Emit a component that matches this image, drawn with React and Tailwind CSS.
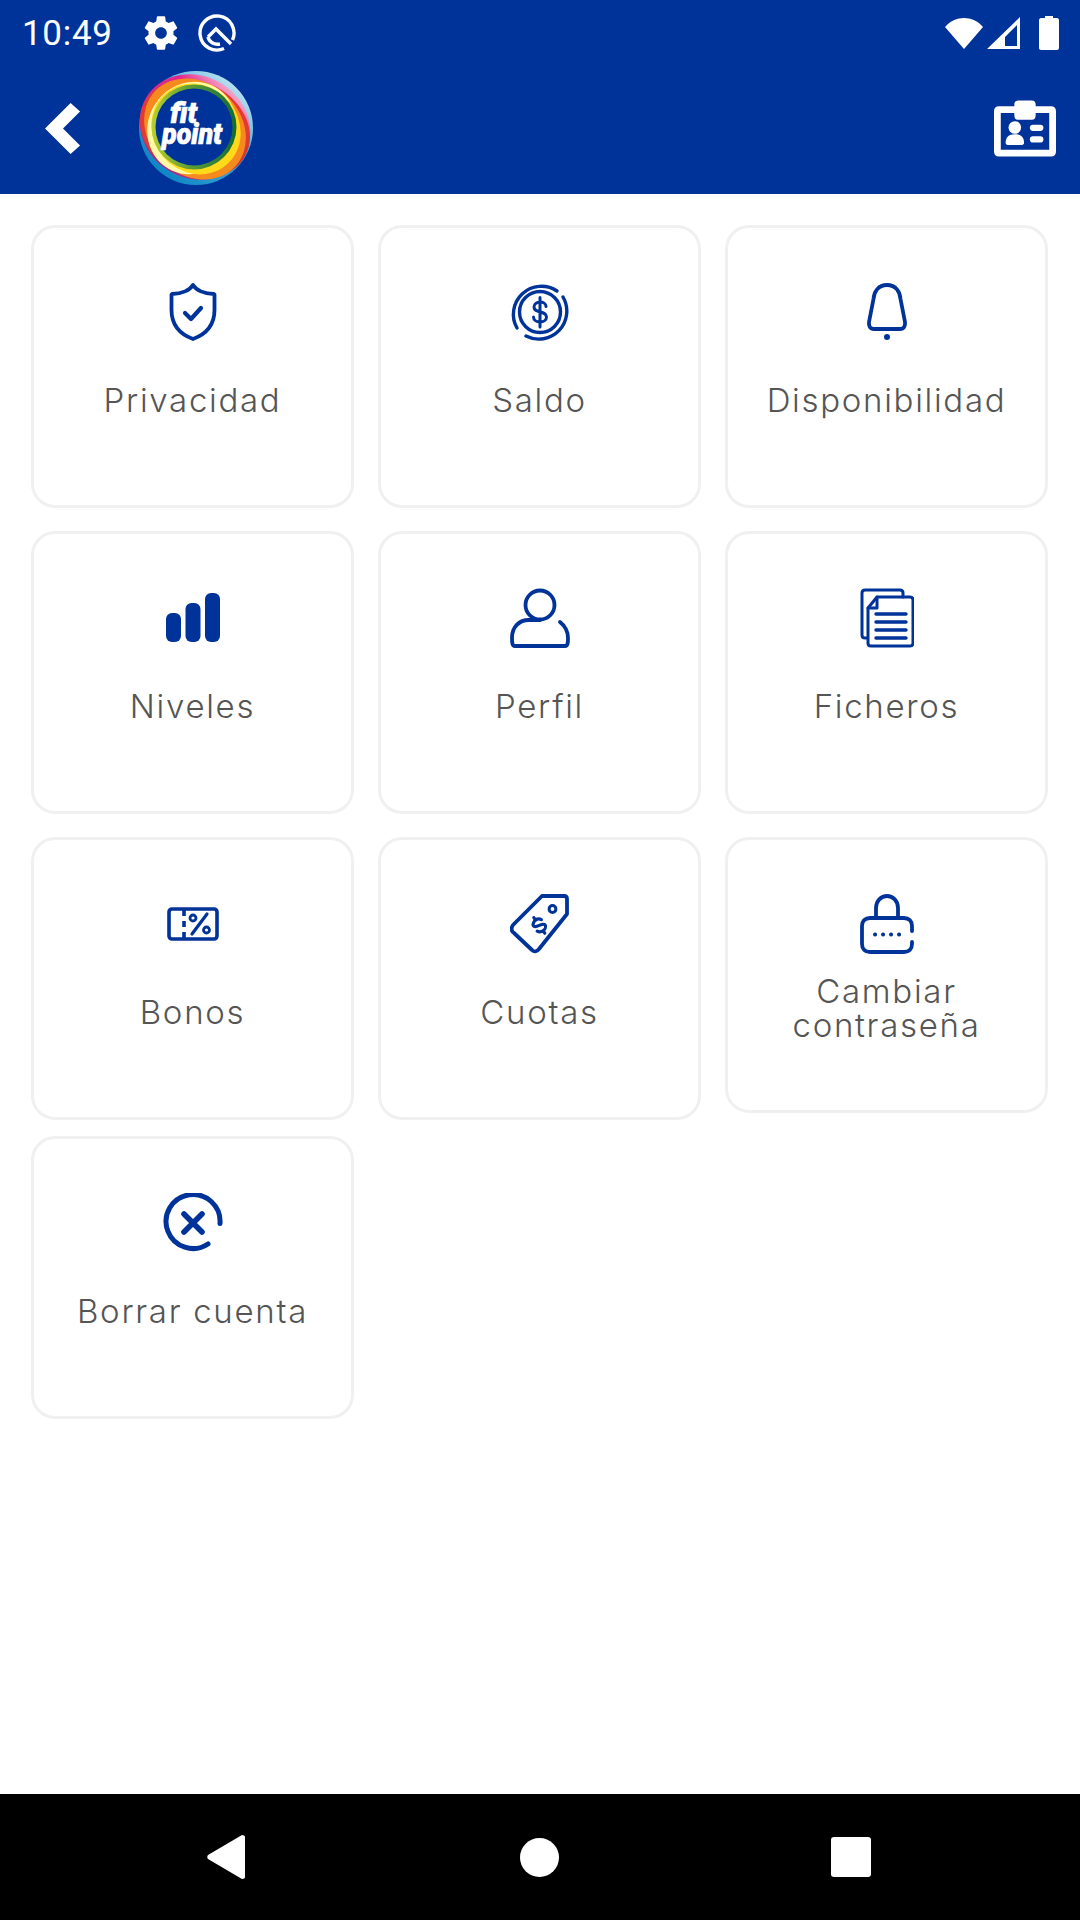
import React from 'react';

const ShieldIcon = () => (
  <svg width="52" height="60" viewBox="0 0 52 60" fill="none" stroke="#003399" strokeWidth="3.800" strokeLinecap="round" strokeLinejoin="round">
    <path d="M26 3c-3 5-11 9-21 9l-.5.5V28c0 14 8 24 21.500 29C39.500 52 47.500 42 47.500 28V12.500l-.5-.5c-10 0-18-4-21-9z" />
    <path d="M18 31l6 6 10-11" strokeWidth="4.200" />
  </svg>
);

const CoinIcon = () => (
  <svg width="60" height="60" viewBox="0 0 60 60" fill="none" stroke="#003399" strokeWidth="3.400" strokeLinecap="round">
    <path d="M47 9A28 28 0 0 0 7 46" />
    <path d="M53 15A28 28 0 0 1 16 54" />
    <circle cx="30" cy="30" r="20.500" />
    <path d="M36 24.500c0-3-3-4.500-6-4.500s-6 2-6 5c0 7 12.500 3 12.500 10 0 3-3 5-6.500 5s-6.500-2-6.500-5M30 15.500V45" strokeWidth="3" />
  </svg>
);

const BellIcon = () => (
  <svg width="44" height="60" viewBox="0 0 44 60" fill="none" stroke="#003399" strokeWidth="3.800" strokeLinecap="round" strokeLinejoin="round">
    <path d="M22 3c-9 0-13 7-13.500 14L4 40c-.5 4 1 7 5 7h26c4 0 5.500-3 5-7l-4.500-23C35 10 31 3 22 3z" />
    <circle cx="22" cy="55" r="3" fill="#003399" stroke="none" />
  </svg>
);

const BarsIcon = () => (
  <svg width="56" height="50" viewBox="0 0 56 50" fill="#003399">
    <rect x="1" y="20" width="15" height="29" rx="6" />
    <rect x="20.500" y="10" width="15" height="39" rx="6" />
    <rect x="40" y="0" width="15" height="49" rx="6" />
  </svg>
);

const UserIcon = () => (
  <svg width="60" height="60" viewBox="0 0 60 60" fill="none" stroke="#003399" strokeWidth="3.800" strokeLinecap="round" strokeLinejoin="round">
    <circle cx="30" cy="17" r="14.500" />
    <path d="M30 32H19C9 32 2 39 2 50c0 4 0 8 3 8h50c3 0 3-4 3-8 0-6-3-12-8-16" />
  </svg>
);

const FilesIcon = () => (
  <svg width="54" height="60" viewBox="0 0 54 60" fill="none" stroke="#003399" strokeWidth="3" strokeLinecap="round" strokeLinejoin="round">
    <path d="M7 50H5c-2 0-3-1-3-3V5c0-2 1-3 3-3h35c2 0 3 1 3 3v4" />
    <path d="M8 20v35c0 2 1 3 3 3h39c2 0 3-1 3-3V12c0-2-1-3-3-3H17z" />
    <path d="M17 9v11H8" />
    <path d="M16 27h30M16 35h30M16 43h30M16 51h30" strokeWidth="3.400" transform="translate(0 -1)" />
  </svg>
);

const TicketIcon = () => (
  <svg width="52" height="34" viewBox="0 0 52 34" fill="none" stroke="#003399" strokeWidth="3.600" strokeLinejoin="round">
    <rect x="2" y="2" width="48" height="30" rx="3" />
    <path d="M17 2v7M17 14v6M17 25v7" />
    <path d="M25 27l15-20" strokeLinecap="round" strokeWidth="3.200" />
    <circle cx="26" cy="11" r="3" strokeWidth="2.800" />
    <circle cx="39.500" cy="23" r="3" strokeWidth="2.800" />
  </svg>
);

const TagIcon = () => (
  <svg width="60" height="60" viewBox="0 0 60 60" fill="none" stroke="#003399" strokeWidth="3.800" strokeLinecap="round" strokeLinejoin="round">
    <path d="M32 2h22c2 0 3 1 3 3v15L29 55c-2 3-5 3-7 1L4 39c-3-2-3-5-1-8z" />
    <circle cx="42.500" cy="15" r="3.400" strokeWidth="3" />
    <g transform="rotate(-35 29 31)">
      <path d="M34 28c-1-2-3-3-5-3s-5 1.500-5 3.500 2.500 2.500 5 3 5 1 5 3-2.500 3.500-5 3.500-4-1-5-3M29 22v3M29 38v3" strokeWidth="3.200" />
    </g>
  </svg>
);

const LockIcon = () => (
  <svg width="54" height="60" viewBox="0 0 54 60" fill="none" stroke="#003399" strokeWidth="3.800" strokeLinecap="round" strokeLinejoin="round">
    <path d="M16 24V14c0-7 5-12 11-12s11 5 11 12v10" />
    <path d="M52 37v-5c0-5-3-8-8-8H10c-5 0-8 3-8 8v18c0 5 3 8 8 8h34c5 0 8-3 8-8v-2" />
    <path d="M15 40.500h.1M23 40.500h.1M31 40.500h.1M39 40.500h.1" strokeWidth="4" />
  </svg>
);

const CancelIcon = () => (
  <svg width="60" height="60" viewBox="0 0 60 60" fill="none" stroke="#003399" strokeWidth="5" strokeLinecap="round">
    <path d="M45 51A27 27 0 1 1 57 30.500" />
    <path d="M21 21l18 18M39 21L21 39" strokeWidth="5.600" />
  </svg>
);

const items = [
  { label: 'Privacidad', icon: <ShieldIcon /> },
  { label: 'Saldo', icon: <CoinIcon /> },
  { label: 'Disponibilidad', icon: <BellIcon /> },
  { label: 'Niveles', icon: <BarsIcon /> },
  { label: 'Perfil', icon: <UserIcon /> },
  { label: 'Ficheros', icon: <FilesIcon /> },
  { label: 'Bonos', icon: <TicketIcon /> },
  { label: 'Cuotas', icon: <TagIcon /> },
  { label: 'Cambiar contraseña', icon: <LockIcon />, short: true },
  { label: 'Borrar cuenta', icon: <CancelIcon /> },
];

function Card({ label, icon, short }) {
  return (
    <div className={`flex flex-col items-center rounded-[24px] border-[3px] border-[#f0f0f0] bg-white pt-[54px] ${short ? 'h-[276px] px-8' : 'h-[283px] px-2'}`}>
      <div className="flex h-[60px] items-center justify-center">{icon}</div>
      <div className={`text-center font-['Inter',sans-serif] font-light text-[#555555] text-[33px] leading-[34px] tracking-[1.7px] ${short ? 'mt-[20px]' : 'mt-[41px]'}`}>
        {label}
      </div>
    </div>
  );
}

function Logo() {
  return (
    <svg width="116" height="118" viewBox="0 0 116 118">
      <defs>
        <linearGradient id="skin" x1="0.85" y1="0.1" x2="0.15" y2="0.9">
          <stop offset="0" stopColor="#bfe3f2" />
          <stop offset="0.35" stopColor="#4fb3de" />
          <stop offset="1" stopColor="#0b84c4" />
        </linearGradient>
        <linearGradient id="pink" x1="0.7" y1="0" x2="0.4" y2="1">
          <stop offset="0" stopColor="#f7b6d2" />
          <stop offset="0.3" stopColor="#e2288c" />
          <stop offset="0.75" stopColor="#c92f8c" />
          <stop offset="1" stopColor="#9c2f88" />
        </linearGradient>
        <linearGradient id="red" x1="0" y1="0" x2="1" y2="1">
          <stop offset="0" stopColor="#e8392f" />
          <stop offset="0.6" stopColor="#e23a34" />
          <stop offset="1" stopColor="#b3302f" />
        </linearGradient>
        <linearGradient id="ring" x1="0" y1="0" x2="1" y2="0">
          <stop offset="0" stopColor="#b8d030" />
          <stop offset="0.45" stopColor="#5f9e35" />
          <stop offset="1" stopColor="#0f6a35" />
        </linearGradient>
      </defs>
      <circle cx="58" cy="59" r="57" fill="url(#skin)" />
      <ellipse cx="57" cy="58" rx="57" ry="51" transform="rotate(32 57 58)" fill="url(#pink)" />
      <ellipse cx="57" cy="60" rx="57" ry="47" transform="rotate(28 57 60)" fill="url(#red)" />
      <ellipse cx="57" cy="60" rx="55" ry="46" transform="rotate(44 57 60)" fill="#f58a1f" />
      <ellipse cx="54" cy="59" rx="47" ry="44" transform="rotate(-60 54 59)" fill="#fff9a8" />
      <ellipse cx="58" cy="60" rx="47" ry="43" transform="rotate(50 58 60)" fill="#ffd91a" />
      <circle cx="56" cy="58" r="42.500" fill="url(#ring)" />
      <circle cx="56" cy="58" r="38.500" fill="#003399" />
      <text fill="#fff" stroke="#fff" strokeWidth="0.7" fontFamily="'Roboto',sans-serif" fontSize="29" fontWeight="900" fontStyle="italic">
        <tspan x="32" y="54" textLength="27" lengthAdjust="spacingAndGlyphs">fit</tspan>
        <tspan x="24" y="75" textLength="60" lengthAdjust="spacingAndGlyphs">point</tspan>
      </text>
    </svg>
  );
}

function StatusBar() {
  return (
    <div className="flex h-[64px] items-center justify-between pl-[22px] pr-[21px] pt-[2px]">
      <div className="flex items-center">
        <span className="font-['Roboto',sans-serif] text-[35px] leading-none tracking-[0.7px] text-white">10:49</span>
        {/* settings gear */}
        <svg className="ml-[28px]" width="40" height="40" viewBox="0 0 24 24" fill="#fff">
          <path d="M19.430 12.980c.04-.32.07-.64.07-.98s-.03-.66-.07-.98l2.110-1.650c.19-.15.24-.42.12-.64l-2-3.460c-.12-.22-.39-.30-.61-.22l-2.490 1c-.52-.40-1.080-.73-1.690-.98l-.38-2.650A.49.49 0 0 0 14 2h-4c-.25 0-.46.18-.49.42l-.38 2.650c-.61.25-1.170.59-1.690.98l-2.490-1c-.23-.09-.49 0-.61.22l-2 3.460c-.13.22-.07.49.12.64l2.110 1.650c-.04.32-.07.65-.07.98s.03.66.07.98l-2.110 1.650c-.19.15-.24.42-.12.64l2 3.460c.12.22.39.30.61.22l2.490-1c.52.40 1.080.73 1.690.98l.38 2.650c.03.24.24.42.49.42h4c.25 0 .46-.18.49-.42l.38-2.650c.61-.25 1.170-.59 1.690-.98l2.490 1c.23.09.49 0 .61-.22l2-3.460c.12-.22.07-.49-.12-.64l-2.110-1.650zM12 15.500c-1.930 0-3.500-1.570-3.500-3.500s1.570-3.500 3.500-3.500 3.500 1.570 3.500 3.500-1.570 3.500-3.500 3.500z" />
        </svg>
        {/* ring with the wedge inside */}
        <svg className="ml-[17px]" width="38" height="38" viewBox="0 0 38 38" fill="none" stroke="#fff" strokeWidth="3.400">
          <path d="M26 34.500A17 17 0 1 1 34.500 26" />
          <path d="M10 23l8-8 15 15" />
          <path d="M10 23c1 5 6 8 12 7" />
        </svg>
      </div>
      <div className="flex items-center">
        <svg width="40" height="33" viewBox="0 0 40 33" fill="#fff"><path d="M1 10C6 4 13 1 20 1s14 3 19 9L20 32z" /></svg>
        <svg className="ml-[3px]" width="33" height="33" viewBox="0 0 33 33" fill="#fff"><path fillRule="evenodd" d="M33 0v32H0zM30 8L18 20v9h12z" /></svg>
        <svg className="ml-[19px]" width="20" height="34" viewBox="0 0 20 34" fill="#fff"><path d="M6 0h8v2h4c1 0 2 1 2 2v28c0 1-1 2-2 2H2c-1 0-2-1-2-2V4c0-1 1-2 2-2h4z" /></svg>
      </div>
    </div>
  );
}

function Header() {
  return (
    <div className="flex h-[130px] items-start justify-between pl-[45px] pr-[24px]">
      <div className="flex items-start">
        <svg className="mt-[38px]" width="36" height="53" viewBox="0 0 38 54" fill="#fff"><path d="M27 0l10 9-18 18 18 18-10 9L0 27z" /></svg>
        <div className="ml-[57px] mt-[5px]"><Logo /></div>
      </div>
      <svg className="mt-[36px]" width="62" height="57" viewBox="0 0 64 58">
        <path fillRule="evenodd" fill="#fff" d="M21 6V4c0-2 1-4 4-4h14c3 0 4 2 4 4v2h16c3 0 5 2 5 5v42c0 3-2 5-5 5H5c-3 0-5-2-5-5V11c0-3 2-5 5-5zM7 13v38h50V13H43v2c0 3-1 5-4 5H25c-3 0-4-2-4-5v-2z" />
        <circle cx="21.500" cy="28" r="6.500" fill="#fff" />
        <path fill="#fff" d="M12 44c0-6 3-9 9.500-9s9.500 3 9.500 9c0 1-1 2-2 2H14c-1 0-2-1-2-2z" />
        <rect x="37" y="25" width="14" height="6.500" rx="3.200" fill="#fff" />
        <rect x="37" y="37" width="14" height="6.500" rx="3.200" fill="#fff" />
      </svg>
    </div>
  );
}

export default function App() {
  return (
    <div className="flex h-[1920px] w-[1080px] flex-col overflow-hidden bg-white">
      <div className="h-[194px] bg-[#003399]">
        <StatusBar />
        <Header />
      </div>

      <div className="flex-1 px-[31px] pt-[31px]">
        <div className="grid grid-cols-[323px_323px_323px] items-start gap-x-[24px]">
          {items.map((item, i) => (
            <div key={item.label} className={i < 6 ? 'mb-[23px]' : i < 9 ? 'mb-[16px]' : ''}>
              <Card {...item} />
            </div>
          ))}
        </div>
      </div>

      <div className="flex h-[126px] items-center bg-black pl-[207px]">
        <svg width="38" height="44" viewBox="0 0 38 44" fill="#fff"><path d="M35 0c2 0 3 1 3 2v40c0 1-1 2-3 2L1 24c-1-1-1-3 0-4z" /></svg>
        <div className="ml-[275px] h-[39px] w-[39px] rounded-full bg-white" />
        <div className="ml-[272px] h-[40px] w-[40px] rounded-[3px] bg-white" />
      </div>
    </div>
  );
}
